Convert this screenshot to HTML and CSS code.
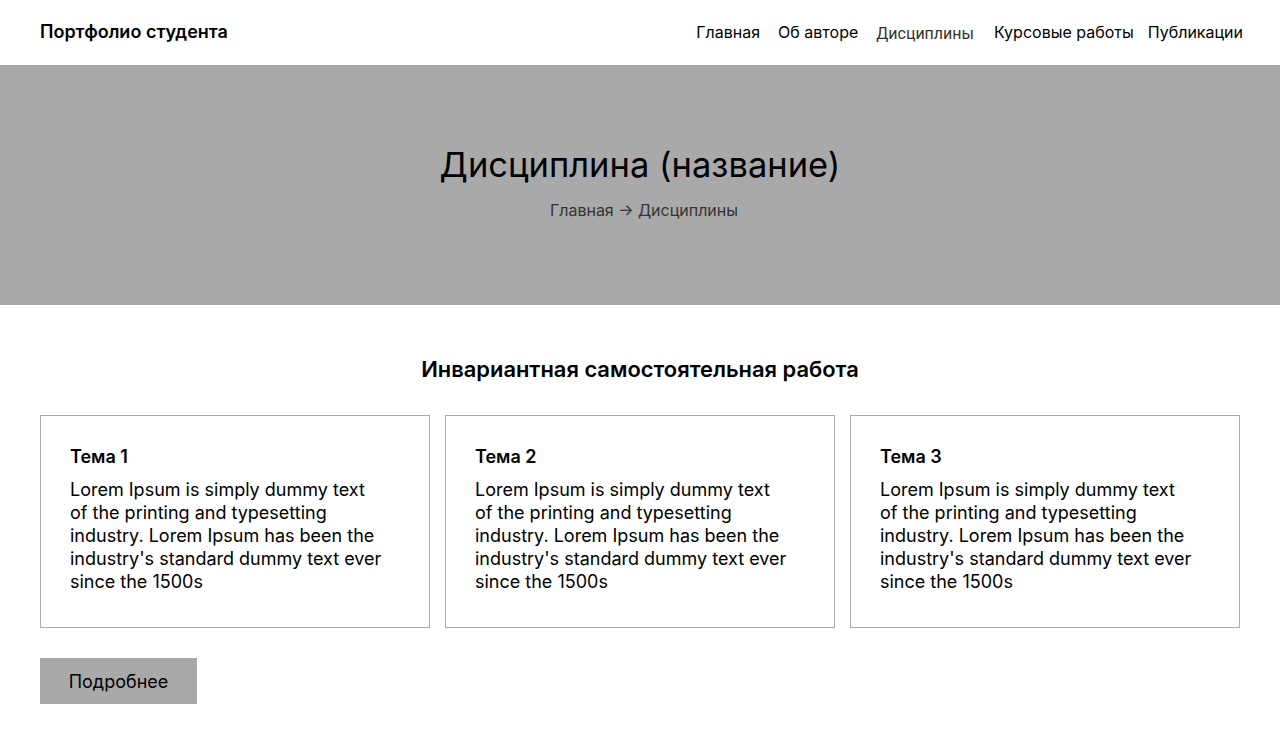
FILE: index.html
```html
<!DOCTYPE html>
<html lang="ru">
<head>
<meta charset="utf-8">
<title>Дисциплина</title>
<link rel="stylesheet" href="styles.css">
</head>
<body>
<header class="header">
  <div class="logo">Портфолио студента</div>
  <nav class="nav">
    <a class="nav-link" href="#">Главная</a>
    <a class="nav-link" href="#">Об авторе</a>
    <a class="nav-link nav-link--current" href="#">Дисциплины</a>
    <a class="nav-link" href="#">Курсовые работы</a>
    <a class="nav-link nav-link--last" href="#">Публикации</a>
  </nav>
</header>
<section class="hero">
  <h1 class="hero-title">Дисциплина (название)</h1>
  <div class="breadcrumbs">Главная → Дисциплины</div>
</section>
<main class="content">
  <h2 class="section-title">Инвариантная самостоятельная работа</h2>
  <div class="cards">
    <div class="card">
      <h3 class="card-title">Тема 1</h3>
      <p class="card-text">Lorem Ipsum is simply dummy text of the printing and typesetting industry. Lorem Ipsum has been the industry's standard dummy text ever since the 1500s</p>
    </div>
    <div class="card">
      <h3 class="card-title">Тема 2</h3>
      <p class="card-text">Lorem Ipsum is simply dummy text of the printing and typesetting industry. Lorem Ipsum has been the industry's standard dummy text ever since the 1500s</p>
    </div>
    <div class="card">
      <h3 class="card-title">Тема 3</h3>
      <p class="card-text">Lorem Ipsum is simply dummy text of the printing and typesetting industry. Lorem Ipsum has been the industry's standard dummy text ever since the 1500s</p>
    </div>
  </div>
  <button class="btn">Подробнее</button>
</main>
</body>
</html>
```
FILE: styles.css
```css
* { box-sizing: border-box; }
body {
  margin: 0;
  font-family: Inter, "Noto Sans", sans-serif;
  color: #000;
  background: #fff;
}
.header {
  height: 65px;
  display: flex;
  align-items: center;
  justify-content: space-between;
  padding: 0 37px 2px 40px;
}
.logo {
  font-size: 18px;
  font-weight: 600;
}
.nav {
  display: flex;
  align-items: center;
  gap: 18px;
}
.nav-link {
  font-size: 16px;
  color: #000;
  text-decoration: none;
}
.nav-link--current {
  font-family: Roboto, sans-serif;
  color: #333;
  margin-top: 4px;
  margin-left: 0;
  margin-right: 2px;
}
.nav-link--last {
  margin-left: -4px;
}
.hero {
  height: 240px;
  background: #a9a9a9;
  display: flex;
  flex-direction: column;
  align-items: center;
  justify-content: center;
  padding-bottom: 7px;
}
.hero-title {
  margin: 0;
  font-size: 34.5px;
  font-weight: 400;
  line-height: 44px;
}
.breadcrumbs {
  margin-top: 13px;
  padding-left: 8px;
  font-size: 16px;
  color: #333;
}
.content {
  padding: 52px 40px 36px;
}
.section-title {
  margin: 0 0 34px;
  text-align: center;
  font-size: 21.9px;
  font-weight: 600;
  line-height: 24px;
}
.cards {
  display: grid;
  grid-template-columns: repeat(3, 1fr);
  gap: 15px;
}
.card {
  border: 1px solid #a9a9a9;
  height: 213px;
  padding: 30px 29px;
}
.card-title {
  margin: 0 0 10px;
  font-size: 18px;
  font-weight: 600;
  line-height: 22px;
}
.card-text {
  margin: 0;
  max-width: 315px;
  font-size: 18px;
  line-height: 23px;
}
.btn {
  margin-top: 30px;
  width: 157px;
  height: 46px;
  border: none;
  background: #a9a9a9;
  font-family: Inter, sans-serif;
  font-size: 18px;
  color: #000;
  padding: 0;
}
```
